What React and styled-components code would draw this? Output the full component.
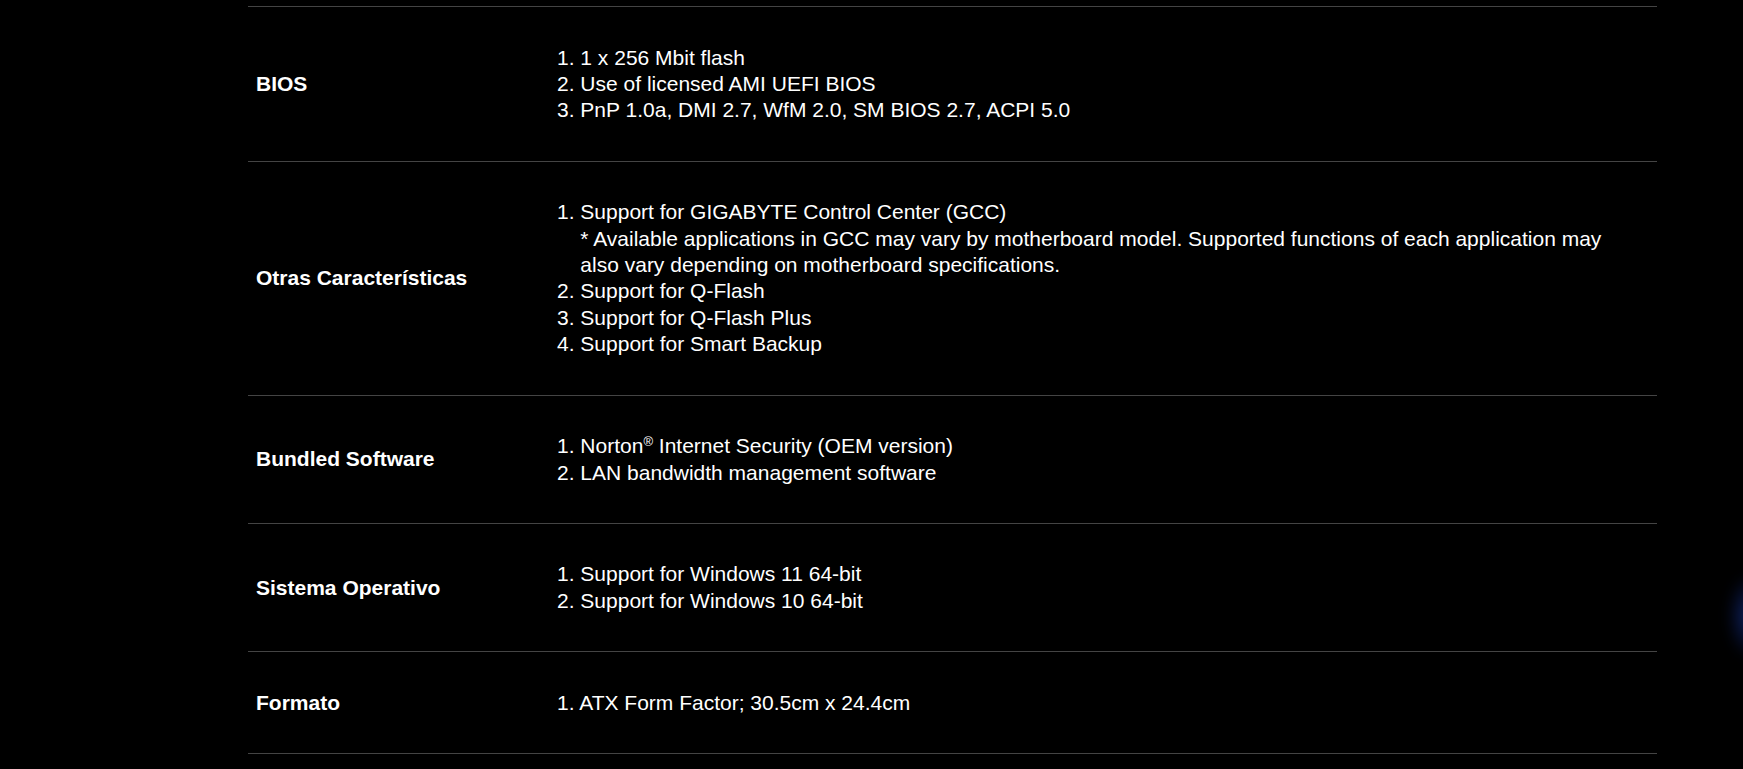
import React from "react";
import styled, { createGlobalStyle } from "styled-components";

const Global = createGlobalStyle`
  html, body {
    margin: 0;
    padding: 0;
    background: #000;
    overflow: hidden;
  }
  body {
    font-family: "Liberation Sans", Arial, sans-serif;
    color: #fff;
  }
`;

const Page = styled.div`
  position: relative;
  min-height: 769px;
  padding: 6px 0 0 248px;
  box-sizing: border-box;
`;

const SpecTable = styled.div`
  width: 1409px;
  border-top: 1px solid #444;
`;

const Row = styled.div`
  display: grid;
  grid-template-columns: 309px 1fr;
  align-items: center;
  border-bottom: 1px solid #444;
  padding: 37.5px 0 37px;
`;

const Label = styled.div`
  padding-left: 8px;
  font-size: 21px;
  font-weight: 700;
  line-height: 26.4px;
`;

const Values = styled.div`
  font-size: 21px;
  line-height: 26.4px;
  padding-right: 16px;
`;

const Item = styled.div`
  padding-left: 1.112em;
  text-indent: -1.112em;
`;

const Note = styled.div`
  text-indent: 0;
`;

const Sup = styled.sup`
  font-size: 0.62em;
  line-height: 0;
  vertical-align: 0.55em;
`;

const Glow = styled.div`
  position: absolute;
  right: -28px;
  top: 574px;
  width: 44px;
  height: 84px;
  border-radius: 50%;
  background: radial-gradient(ellipse at center, rgba(30, 70, 190, 0.5) 0%, rgba(15, 40, 130, 0.28) 45%, rgba(0, 0, 0, 0) 72%);
  filter: blur(6px);
`;

const specs = [
  {
    label: "BIOS",
    items: [
      "1 x 256 Mbit flash",
      "Use of licensed AMI UEFI BIOS",
      "PnP 1.0a, DMI 2.7, WfM 2.0, SM BIOS 2.7, ACPI 5.0",
    ],
  },
  {
    label: "Otras Características",
    items: [
      {
        text: "Support for GIGABYTE Control Center (GCC)",
        note:
          "* Available applications in GCC may vary by motherboard model. Supported functions of each application may also vary depending on motherboard specifications.",
      },
      "Support for Q-Flash",
      "Support for Q-Flash Plus",
      "Support for Smart Backup",
    ],
  },
  {
    label: "Bundled Software",
    items: [
      <>
        Norton<Sup>®</Sup> Internet Security (OEM version)
      </>,
      "LAN bandwidth management software",
    ],
  },
  {
    label: "Sistema Operativo",
    items: ["Support for Windows 11 64-bit", "Support for Windows 10 64-bit"],
  },
  {
    label: "Formato",
    items: ["ATX Form Factor; 30.5cm x 24.4cm"],
  },
];

export default function App() {
  return (
    <>
      <Global />
      <Page>
        <SpecTable>
          {specs.map((s) => (
            <Row key={s.label}>
              <Label>{s.label}</Label>
              <Values>
                {s.items.map((it, i) => {
                  const isObj = it && typeof it === "object" && "text" in it;
                  return (
                    <Item key={i}>
                      {i + 1}. {isObj ? it.text : it}
                      {isObj && <Note>{it.note}</Note>}
                    </Item>
                  );
                })}
              </Values>
            </Row>
          ))}
        </SpecTable>
        <Glow />
      </Page>
    </>
  );
}
